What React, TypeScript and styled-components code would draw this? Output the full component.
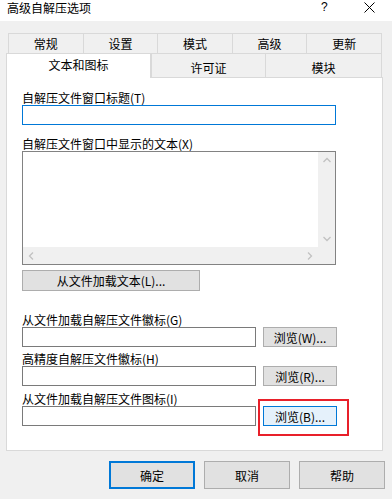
import React from "react";
import styled, { createGlobalStyle } from "styled-components";

const GlobalStyle = createGlobalStyle`
  html, body {
    margin: 0;
    padding: 0;
    background: #f0f0f0;
  }
  body {
    font-family: "Noto Sans CJK SC", "Microsoft YaHei UI", "Noto Sans", sans-serif;
    font-size: 12px;
    color: #000;
  }
  * { box-sizing: border-box; }
`;

const Window = styled.div`
  width: 392px;
  height: 499px;
  background: #f0f0f0;
  display: flex;
  flex-direction: column;
  overflow: hidden;
`;

const TitleBar = styled.div`
  height: 21px;
  background: #fff;
  display: flex;
  align-items: flex-start;
  padding-left: 7px;
`;

const Title = styled.div`
  flex: 1;
  line-height: 15px;
  font-size: 12px;
  white-space: nowrap;
`;

const HelpGlyph = styled.div`
  width: 14px;
  line-height: 15px;
  font-family: "Liberation Sans", Arial, sans-serif;
  font-size: 12px;
  margin-right: 29px;
  text-align: left;
`;

const CloseBox = styled.div`
  width: 28px;
  height: 15px;
  display: flex;
  align-items: center;
  justify-content: flex-start;
`;

const TabArea = styled.div`
  margin-top: 12px;
  display: flex;
  flex-direction: column;
`;

const TabRow = styled.div<{ $indent: number; $width: number }>`
  display: flex;
  margin-left: ${(p) => p.$indent}px;
  width: ${(p) => p.$width}px;
`;

const TopTab = styled.div`
  flex: 1;
  height: 20px;
  border-top: 1px solid #d9d9d9;
  border-left: 1px solid #d9d9d9;
  display: flex;
  align-items: center;
  justify-content: center;
  line-height: 15px;
  &:last-child {
    border-right: 1px solid #d9d9d9;
  }
`;

const BottomTab = styled.div<{ $w: number; $selected?: boolean }>`
  width: ${(p) => p.$w}px;
  height: ${(p) => (p.$selected ? 25 : 24)}px;
  margin-bottom: ${(p) => (p.$selected ? -1 : 0)}px;
  position: relative;
  z-index: ${(p) => (p.$selected ? 2 : 1)};
  background: ${(p) => (p.$selected ? "#fff" : "#f0f0f0")};
  border-top: 1px solid #d9d9d9;
  border-left: 1px solid #d9d9d9;
  border-right: ${(p) => (p.$selected ? "1px solid #d9d9d9" : "none")};
  display: flex;
  align-items: center;
  justify-content: center;
  line-height: 15px;
  padding-top: ${(p) => (p.$selected ? 0 : 3)}px;
  padding-bottom: ${(p) => (p.$selected ? 3 : 0)}px;
  &:last-child {
    border-right: 1px solid #d9d9d9;
  }
`;

const Panel = styled.div`
  margin-left: 6px;
  width: 377px;
  height: 374px;
  background: #fff;
  border: 1px solid #d9d9d9;
  padding: 0 0 0 15px;
  display: flex;
  flex-direction: column;
  align-items: flex-start;
`;

const Label = styled.div<{ $top: number }>`
  margin-top: ${(p) => p.$top}px;
  height: 15px;
  line-height: 15px;
  white-space: nowrap;
`;

const TextInput = styled.div<{ $w: number; $focused?: boolean }>`
  width: ${(p) => p.$w}px;
  height: 20px;
  background: #fff;
  border: 1px solid ${(p) => (p.$focused ? "#0078d7" : "#7a7a7a")};
  flex: none;
`;

const TextArea = styled.div`
  width: 314px;
  height: 114px;
  border: 1px solid #828282;
  display: grid;
  grid-template-columns: 1fr 17px;
  grid-template-rows: 1fr 17px;
  background: #f0f0f0;
`;

const TextAreaBody = styled.div`
  background: #fff;
`;

const VScroll = styled.div`
  grid-row: 1 / 2;
  grid-column: 2 / 3;
  display: flex;
  flex-direction: column;
  justify-content: space-between;
  background: #f0f0f0;
`;

const HScroll = styled.div`
  grid-row: 2 / 3;
  grid-column: 1 / 2;
  display: flex;
  justify-content: space-between;
  background: #f0f0f0;
`;

const Corner = styled.div`
  background: #f0f0f0;
`;

const ArrowCell = styled.div`
  width: 17px;
  height: 17px;
  display: flex;
  align-items: center;
  justify-content: center;
`;

const Button = styled.div<{ $w: number; $h: number; $variant?: "normal" | "hot" | "default" }>`
  width: ${(p) => p.$w}px;
  height: ${(p) => p.$h}px;
  flex: none;
  display: flex;
  align-items: center;
  justify-content: center;
  line-height: 15px;
  white-space: nowrap;
  background: ${(p) => (p.$variant === "hot" ? "#e5f1fb" : "#e1e1e1")};
  border: ${(p) =>
    p.$variant === "default"
      ? "2px solid #0078d7"
      : p.$variant === "hot"
      ? "1px solid #0078d7"
      : "1px solid #adadad"};
`;

const LoadButtonWrap = styled.div`
  margin-top: 5px;
`;

const FieldRow = styled.div`
  display: flex;
  align-items: flex-start;
  gap: 7px;
`;

const Highlight = styled.div`
  position: relative;
`;

const RedFrame = styled.div`
  position: absolute;
  left: -5px;
  top: -7px;
  width: 91px;
  height: 37px;
  border: 2px solid #e8202a;
  pointer-events: none;
`;

const Footer = styled.div`
  margin-top: 10px;
  display: flex;
  justify-content: flex-end;
  gap: 9px;
  padding-right: 7px;
`;

const Chevron = ({ dir }: { dir: "up" | "down" | "left" | "right" }) => {
  const paths: Record<string, string> = {
    up: "M0.5 5 L4 1.5 L7.5 5",
    down: "M0.5 2 L4 5.5 L7.5 2",
    left: "M5 0.5 L1.5 4 L5 7.5",
    right: "M2 0.5 L5.5 4 L2 7.5",
  };
  return (
    <svg width="8" height="8" viewBox="0 0 8 8">
      <path d={paths[dir]} fill="none" stroke="#c2c2c2" strokeWidth="1.3" />
    </svg>
  );
};

export default function App() {
  return (
    <>
      <GlobalStyle />
      <Window>
        <TitleBar>
          <Title>高级自解压选项</Title>
          <HelpGlyph>?</HelpGlyph>
          <CloseBox>
            <svg width="11" height="11" viewBox="0 0 11 11">
              <path d="M0.5 0.5 L10.5 10.5 M10.5 0.5 L0.5 10.5" stroke="#000" strokeWidth="1" fill="none" />
            </svg>
          </CloseBox>
        </TitleBar>
        <TabArea>
          <TabRow $indent={8} $width={374}>
            <TopTab>常规</TopTab>
            <TopTab>设置</TopTab>
            <TopTab>模式</TopTab>
            <TopTab>高级</TopTab>
            <TopTab>更新</TopTab>
          </TabRow>
          <TabRow $indent={6} $width={376}>
            <BottomTab $w={145} $selected>
              文本和图标
            </BottomTab>
            <BottomTab $w={114}>许可证</BottomTab>
            <BottomTab $w={117}>模块</BottomTab>
          </TabRow>
        </TabArea>
        <Panel>
          <Label $top={12}>自解压文件窗口标题(T)</Label>
          <TextInput $w={314} $focused />
          <Label $top={11}>自解压文件窗口中显示的文本(X)</Label>
          <TextArea>
            <TextAreaBody />
            <VScroll>
              <ArrowCell>
                <Chevron dir="up" />
              </ArrowCell>
              <ArrowCell>
                <Chevron dir="down" />
              </ArrowCell>
            </VScroll>
            <HScroll>
              <ArrowCell>
                <Chevron dir="left" />
              </ArrowCell>
              <ArrowCell>
                <Chevron dir="right" />
              </ArrowCell>
            </HScroll>
            <Corner />
          </TextArea>
          <LoadButtonWrap>
            <Button $w={178} $h={21}>
              从文件加载文本(L)...
            </Button>
          </LoadButtonWrap>
          <Label $top={21}>从文件加载自解压文件徽标(G)</Label>
          <FieldRow>
            <TextInput $w={234} />
            <Button $w={74} $h={20}>
              浏览(W)...
            </Button>
          </FieldRow>
          <Label $top={4}>高精度自解压文件徽标(H)</Label>
          <FieldRow>
            <TextInput $w={234} />
            <Button $w={74} $h={20}>
              浏览(R)...
            </Button>
          </FieldRow>
          <Label $top={5}>从文件加载自解压文件图标(I)</Label>
          <FieldRow>
            <TextInput $w={234} />
            <Highlight>
              <Button $w={74} $h={20} $variant="hot">
                浏览(B)...
              </Button>
              <RedFrame />
            </Highlight>
          </FieldRow>
        </Panel>
        <Footer>
          <Button $w={86} $h={28} $variant="default">
            确定
          </Button>
          <Button $w={86} $h={28}>
            取消
          </Button>
          <Button $w={86} $h={28}>
            帮助
          </Button>
        </Footer>
      </Window>
    </>
  );
}
